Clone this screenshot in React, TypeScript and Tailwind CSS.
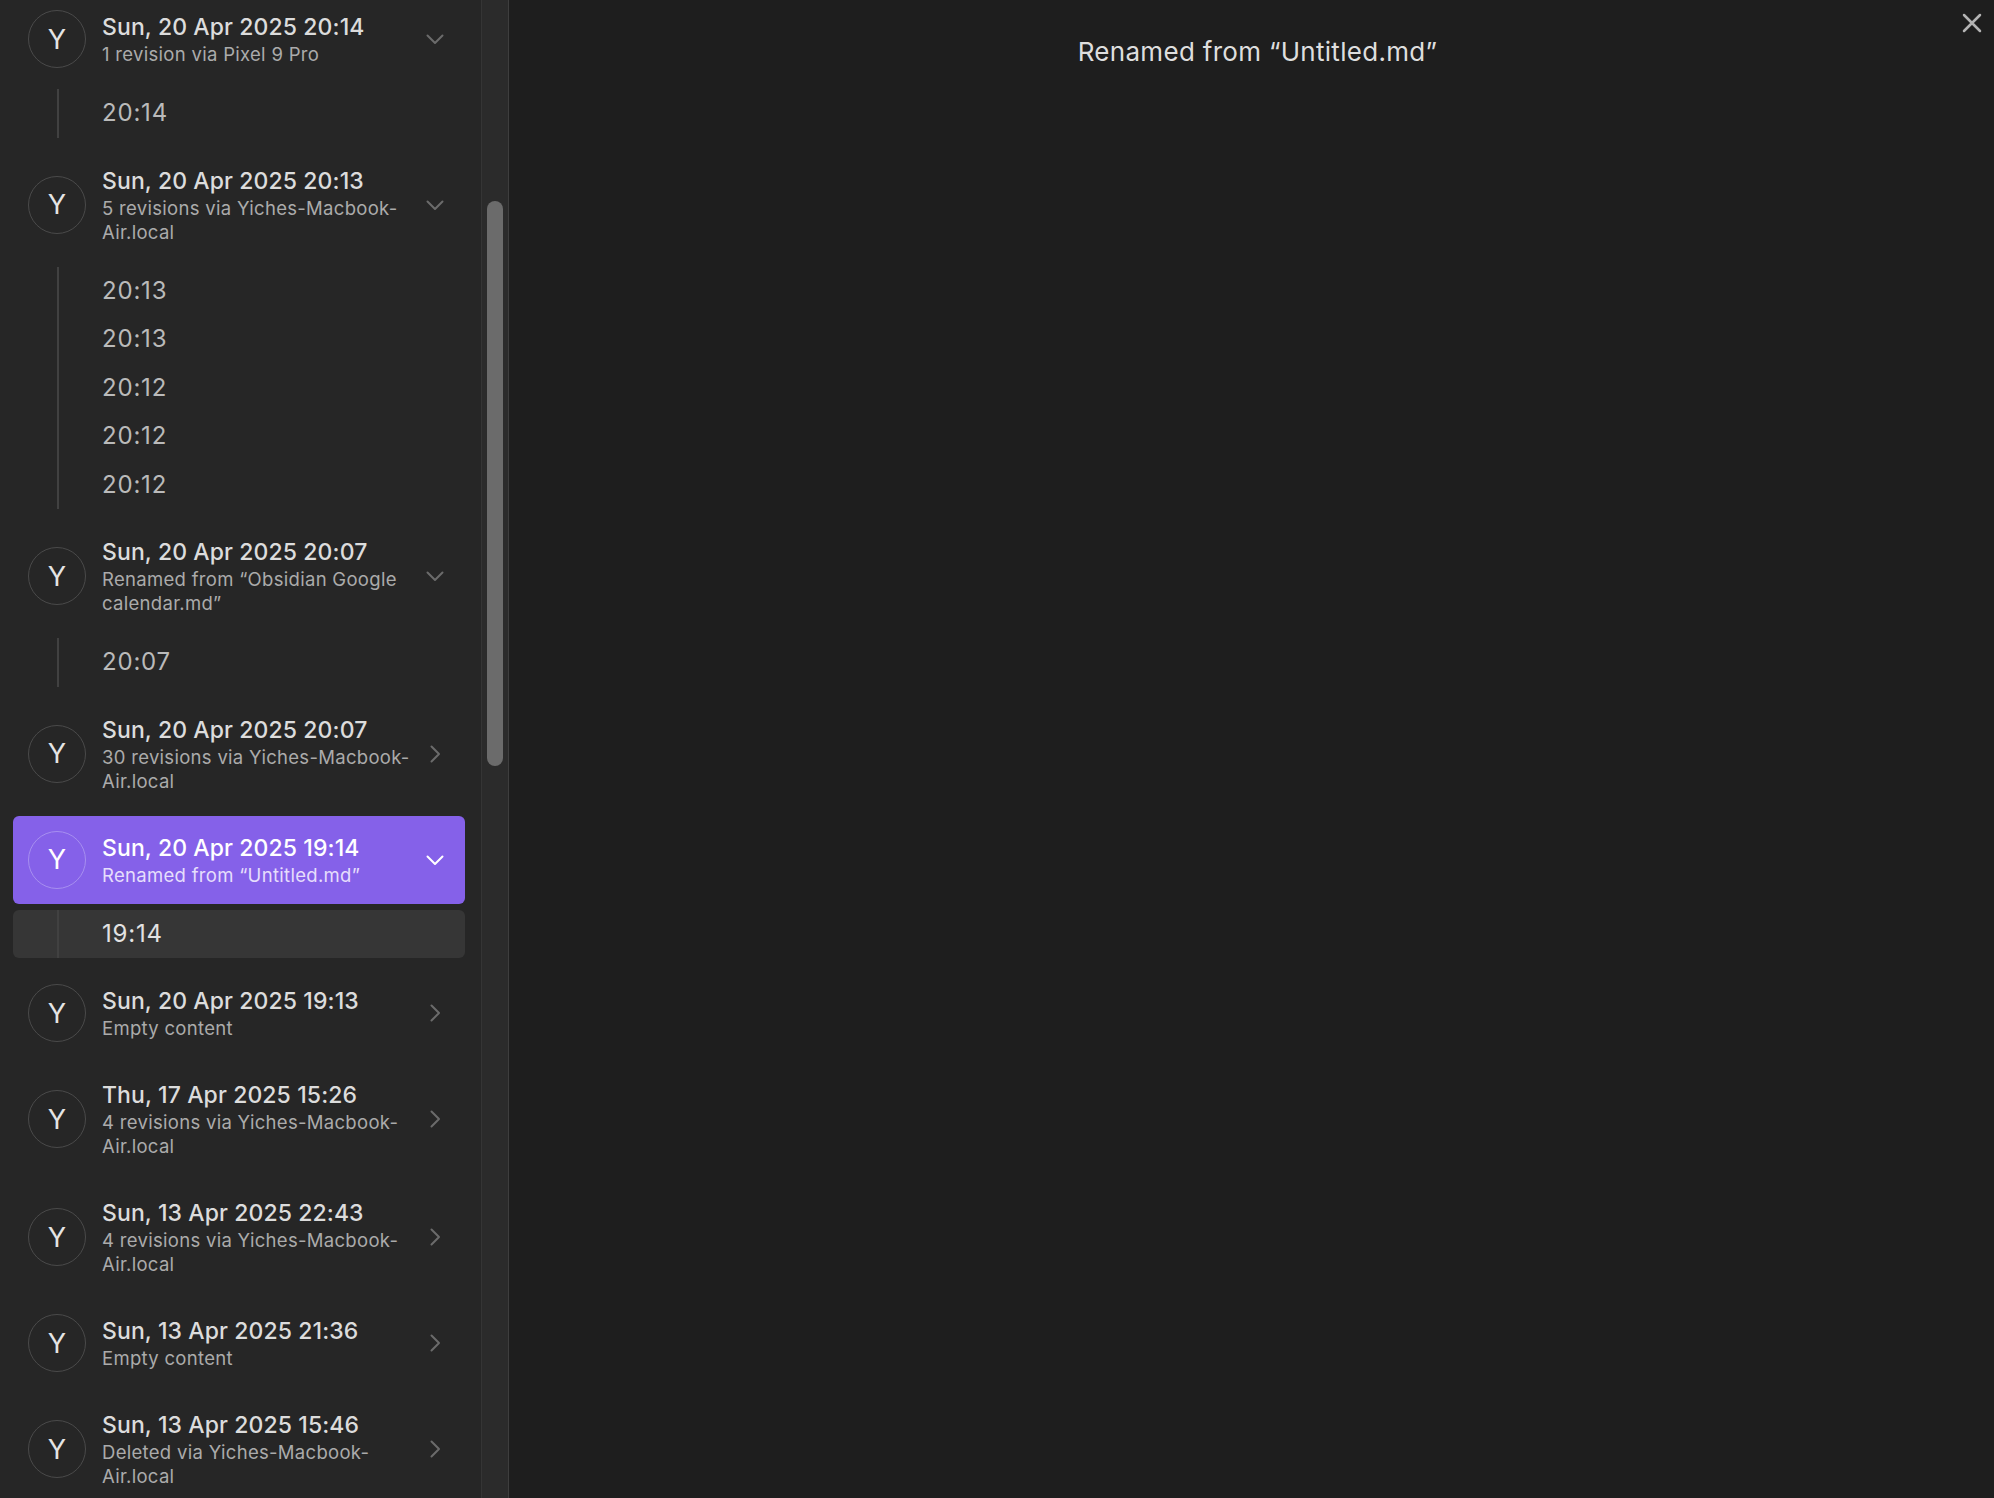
import React from "react";

type Group = {
  title: string;
  sub: string[];
  expanded: boolean;
  selected?: boolean;
  times?: string[];
  selectedTime?: number;
};

const groups: Group[] = [
  { title: "Sun, 20 Apr 2025 20:14", sub: ["1 revision via Pixel 9 Pro"], expanded: true, times: ["20:14"] },
  {
    title: "Sun, 20 Apr 2025 20:13",
    sub: ["5 revisions via Yiches-Macbook-", "Air.local"],
    expanded: true,
    times: ["20:13", "20:13", "20:12", "20:12", "20:12"],
  },
  {
    title: "Sun, 20 Apr 2025 20:07",
    sub: ["Renamed from \u201cObsidian Google", "calendar.md\u201d"],
    expanded: true,
    times: ["20:07"],
  },
  { title: "Sun, 20 Apr 2025 20:07", sub: ["30 revisions via Yiches-Macbook-", "Air.local"], expanded: false },
  {
    title: "Sun, 20 Apr 2025 19:14",
    sub: ["Renamed from \u201cUntitled.md\u201d"],
    expanded: true,
    selected: true,
    times: ["19:14"],
    selectedTime: 0,
  },
  { title: "Sun, 20 Apr 2025 19:13", sub: ["Empty content"], expanded: false },
  { title: "Thu, 17 Apr 2025 15:26", sub: ["4 revisions via Yiches-Macbook-", "Air.local"], expanded: false },
  { title: "Sun, 13 Apr 2025 22:43", sub: ["4 revisions via Yiches-Macbook-", "Air.local"], expanded: false },
  { title: "Sun, 13 Apr 2025 21:36", sub: ["Empty content"], expanded: false },
  { title: "Sun, 13 Apr 2025 15:46", sub: ["Deleted via Yiches-Macbook-", "Air.local"], expanded: false },
];

function Chevron({ down, color }: { down: boolean; color: string }) {
  return (
    <svg width="30" height="30" viewBox="0 0 30 30" fill="none" stroke={color} strokeWidth="2" strokeLinecap="round" strokeLinejoin="round">
      {down ? <path d="M7.5 11.5 L15 19 L22.5 11.5" /> : <path d="M11.5 7.5 L19 15 L11.5 22.5" />}
    </svg>
  );
}

function Header({ g }: { g: Group }) {
  const sel = !!g.selected;
  return (
    <div className="py-[3px] pl-[13px] pr-[16px]">
      <div
        className={
          "flex items-center rounded-[6px] pl-[15px] pr-[15px] py-[17px] " + (sel ? "bg-[#8561e9]" : "")
        }
      >
        <div
          className={
            "-my-[2px] flex h-[58px] w-[58px] shrink-0 items-center justify-center rounded-full border " +
            (sel ? "border-[#a78ff0] text-white" : "border-[#4a4a4a] text-[#e4e4e4]")
          }
        >
          <span className="text-[27px] leading-none">Y</span>
        </div>
        <div className="ml-[16px] min-w-0 flex-1">
          <div
            className={
              "whitespace-nowrap text-[23px] font-medium leading-[30px] tracking-[0.1px] " +
              (sel ? "text-white" : "text-[#dcdcdc]")
            }
          >
            {g.title}
          </div>
          {g.sub.map((s, i) => (
            <div
              key={i}
              className={
                "whitespace-nowrap text-[18.5px] leading-[24px] tracking-[0.3px] " +
                (sel ? "text-[#e6defc]" : "text-[#ababab]")
              }
            >
              {s}
            </div>
          ))}
        </div>
        <div className="ml-[4px] shrink-0">
          <Chevron down={g.expanded} color={sel ? "#ffffff" : "#6b6b6b"} />
        </div>
      </div>
    </div>
  );
}

function Times({ g }: { g: Group }) {
  return (
    <div className="pt-[3px] pb-[8px]">
      {(g.times || []).map((t, i) => {
        const sel = g.selectedTime === i;
        return (
          <div key={i} className="h-[48.5px] pl-[13px] pr-[16px]">
            <div className={"flex h-full items-center rounded-[6px] " + (sel ? "bg-[#363636]" : "")}>
              <div className="ml-[44px] h-full w-[2px] bg-[#414141]" />
              <div
                className={
                  "ml-[43px] text-[24px] leading-none tracking-[0.8px] " + (sel ? "text-[#e2e2e2]" : "text-[#bababa]")
                }
              >
                {t}
              </div>
            </div>
          </div>
        );
      })}
    </div>
  );
}

export default function App() {
  return (
    <div
      className="flex h-[1498px] w-[1994px] overflow-hidden bg-[#1e1e1e]"
      style={{ fontFamily: "Inter, 'Noto Sans', 'Liberation Sans', sans-serif" }}
    >
      <div className="h-full w-[481px] shrink-0 overflow-hidden bg-[#262626]">
        <div className="-mt-[8px]">
          {groups.map((g, i) => (
            <div key={i}>
              <Header g={g} />
              {g.expanded && <Times g={g} />}
            </div>
          ))}
        </div>
      </div>
      <div className="flex h-full w-[28px] shrink-0 justify-center border-l border-r border-l-[#353535] border-r-[#3e3e3e] bg-[#2b2b2b]">
        <div className="mt-[201px] h-[565px] w-[16px] rounded-full bg-[#6b6b6b]" />
      </div>
      <div className="relative h-full flex-1">
        <div className="pt-[36px] pl-[12px] text-center text-[26px] leading-[32px] tracking-[0.3px] text-[#dedede]">
          Renamed from {"\u201cUntitled.md\u201d"}
        </div>
        <div className="absolute right-[12px] top-[13px]">
          <svg width="20" height="20" viewBox="0 0 20 20" stroke="#b4b4b4" strokeWidth="2.5" strokeLinecap="round">
            <path d="M2 2 L18 18 M18 2 L2 18" />
          </svg>
        </div>
      </div>
    </div>
  );
}
